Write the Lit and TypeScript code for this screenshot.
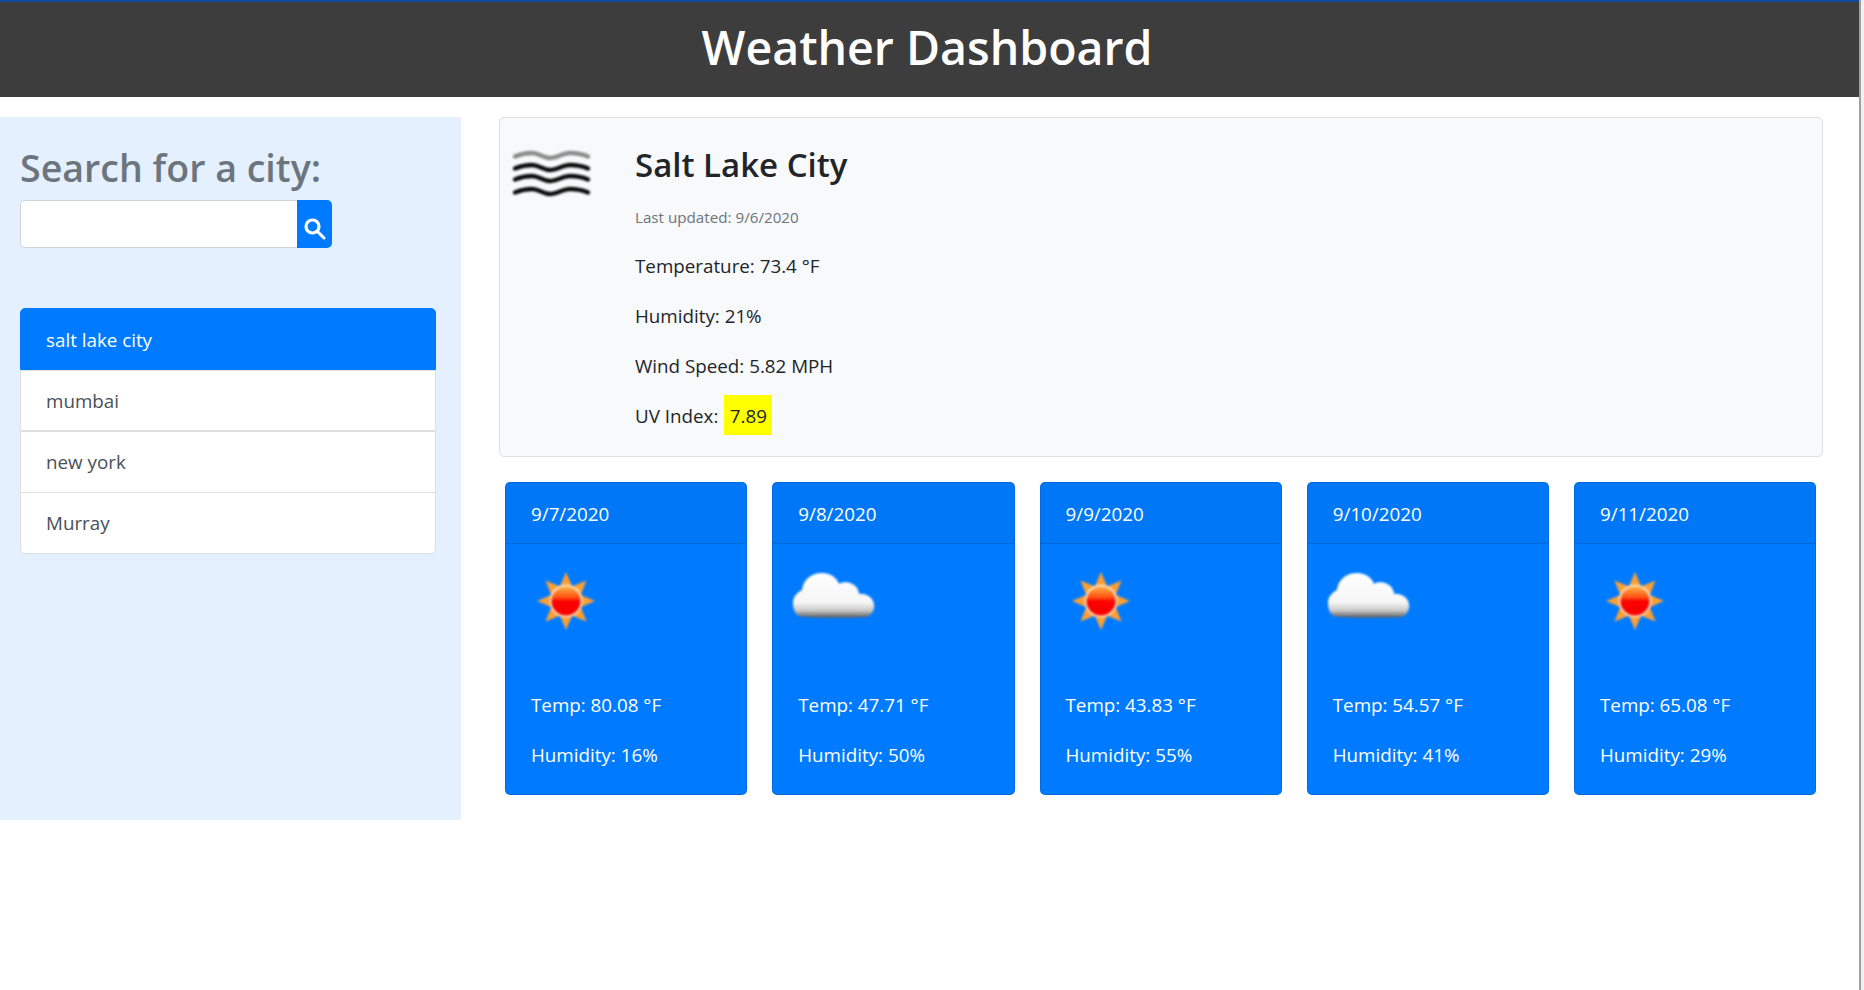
import { LitElement, html, css, svg } from "lit";
import { customElement } from "lit/decorators.js";

const forecast = [
  { date: "9/7/2020", icon: "sun", temp: "80.08", humidity: 16 },
  { date: "9/8/2020", icon: "cloud", temp: "47.71", humidity: 50 },
  { date: "9/9/2020", icon: "sun", temp: "43.83", humidity: 55 },
  { date: "9/10/2020", icon: "cloud", temp: "54.57", humidity: 41 },
  { date: "9/11/2020", icon: "sun", temp: "65.08", humidity: 29 },
];

const cities = ["salt lake city", "mumbai", "new york", "Murray"];

const sunIcon = (id: string) => html`<svg class="weather-icon" viewBox="0 0 88 88">
  <defs>
    <linearGradient id="disk-${id}" x1="0" y1="0" x2="0" y2="1">
      <stop offset="0" stop-color="#ffb347" />
      <stop offset="0.4" stop-color="#ff4a10" />
      <stop offset="0.5" stop-color="#fb0000" />
      <stop offset="1" stop-color="#f80000" />
    </linearGradient>
  </defs>
  <g class="soft">
    ${[0, 45, 90, 135, 180, 225, 270, 315].map(
      (a) => svg`<polygon points="38,29 44,15 50,29 44,44" fill="#fb9f33" transform="rotate(${a} 44 44)" />`
    )}
    <circle cx="44" cy="44" r="16.5" fill="#ffdcb8" />
    <circle cx="44" cy="44" r="14.5" fill="url(#disk-${id})" />
  </g>
</svg>`;

const cloudIcon = (id: string) => html`<svg class="weather-icon" viewBox="0 0 88 88">
  <defs>
    <linearGradient id="cloud-${id}" x1="0" y1="0" x2="0" y2="1">
      <stop offset="0" stop-color="#ffffff" />
      <stop offset="0.66" stop-color="#f6f6f6" />
      <stop offset="0.84" stop-color="#c8c8c8" />
      <stop offset="1" stop-color="#5a5a5a" />
    </linearGradient>
  </defs>
  <path
    class="soft"
    fill="url(#cloud-${id})"
    d="M14 60 C7 60 4 53 4 46 C4 39 9 35 13 33 C14 23 22 16 33 16 C42 16 48 21 50 27 C54 24 64 25 68 31 C69 33 70 35 70 37 C75 36 82 39 84 44 C87 50 84 57 78 60 C68 61 24 61 14 60 Z"
  />
</svg>`;

const mistIcon = html`<svg class="mist-icon" viewBox="0 0 88 64">
  <g fill="none" stroke-width="4.5" stroke-linecap="round" class="soft-more">
    ${[12, 24, 35, 48].map(
      (y, i) => svg`<path
        d="M6 ${y + 1.5} C12 ${y - 1} 18 ${y - 2} 23 ${y - 2} C30 ${y - 2} 34 ${y + 3} 41 ${y + 3} C48 ${y + 3} 54 ${y - 2} 61 ${y - 2} C67 ${y - 2} 73 ${y - 1} 79 ${y + 1.5}"
        stroke=${i === 0 ? "#8a8a8a" : "#0a0a0a"}
      />`
    )}
  </g>
</svg>`;

@customElement("app-root")
export class AppRoot extends LitElement {
  static styles = css`
    :host {
      display: flex;
      min-height: 990px;
      background: #fff;
      font-family: "Open Sans", "Noto Sans", sans-serif;
      font-size: 18.8px;
      line-height: 30px;
      color: #212529;
    }
    * {
      box-sizing: border-box;
    }
    .page {
      flex: 1;
      min-width: 0;
    }
    .scrollbar {
      width: 5px;
      background: linear-gradient(90deg, #a0a0a0 0, #a0a0a0 2px, #f1f1f1 2px);
    }
    .banner {
      height: 97px;
      padding-right: 5px;
      background: #3d3d3d;
      border-top: 2px solid #0f4a9e;
      color: #fff;
      text-align: center;
    }
    .banner h1 {
      margin: 0;
      font-size: 46.5px;
      font-weight: 600;
      line-height: 91px;
    }
    .layout {
      display: flex;
      margin-top: 20px;
    }
    .sidebar {
      width: 461px;
      height: 703px;
      padding: 27px 25px 0 20px;
      background: #e4f0fe;
    }
    .sidebar h2 {
      margin: 0 0 8px;
      font-size: 37.6px;
      font-weight: 600;
      line-height: 48px;
      color: #6c757d;
    }
    .search {
      display: flex;
      width: 312px;
      height: 48px;
    }
    .search input {
      flex: 1;
      min-width: 0;
      border: 1px solid #ced4da;
      border-right: 0;
      border-radius: 5px 0 0 5px;
      background: #fff;
    }
    .search button {
      display: flex;
      justify-content: center;
      width: 35px;
      padding: 18px 0 0;
      border: 0;
      border-radius: 0 5px 5px 0;
      background: #007bff;
    }
    .search svg {
      width: 22px;
      height: 22px;
    }
    .cities {
      margin: 60px 0 0;
      padding: 0;
      list-style: none;
      width: 416px;
    }
    .cities li {
      height: 61.75px;
      margin-top: -0.5px;
      padding: 15px 25px 0;
      border: 1px solid #dfdfdf;
      background: #fff;
      color: #495057;
    }
    .cities li:first-child {
      height: 62px;
      margin-top: 0;
      padding-top: 16px;
      border-color: #007bff;
      border-radius: 5px 5px 0 0;
      background: #007bff;
      color: #fff;
    }
    .cities li:last-child {
      border-radius: 0 0 5px 5px;
    }
    .content {
      flex: 1;
      min-width: 0;
      padding: 0 36px 0 38px;
    }
    .current {
      display: flex;
      height: 340px;
      padding: 26px 26px 26px 13px;
      border: 1px solid #dfdfdf;
      border-radius: 5px;
      background: #f8f9fa;
    }
    .mist-icon {
      flex: none;
      width: 88px;
      height: 64px;
      margin: -1px 38px 0 -4px;
    }
    .current h3 {
      margin: 0 0 15px;
      font-size: 33px;
      font-weight: 600;
      line-height: 42px;
    }
    .current p,
    .day p {
      margin: 0 0 20px;
    }
    .current p:last-child,
    .day p:last-child {
      margin-bottom: 0;
    }
    .current p.updated {
      margin-bottom: 19px;
      padding-top: 1px;
      font-size: 15.2px;
      color: #6c757d;
    }
    .uv {
      display: inline-block;
      margin: -6px 0 -4px 1px;
      padding: 6px 5.5px 4px;
      background: #ff0;
    }
    .forecast {
      display: grid;
      grid-template-columns: repeat(5, 1fr);
      gap: 25px;
      margin: 25px 6.75px 0 6px;
    }
    .day {
      border: 1px solid rgba(0, 0, 0, 0.125);
      border-radius: 5px;
      background: #007bff;
      color: #fff;
    }
    .day header {
      height: 61px;
      padding: 16px 25px 0;
      border-bottom: 1px solid rgba(0, 0, 0, 0.125);
      background: rgba(0, 0, 0, 0.03);
    }
    .day-body {
      padding: 13px 25px 24px;
    }
    .weather-icon {
      display: block;
      width: 88px;
      height: 88px;
      margin: 0 0 45px -9px;
    }
    .soft {
      filter: blur(0.9px);
    }
    .soft-more {
      filter: blur(1.1px);
    }
  `;

  render() {
    return html`
      <div class="page">
        <div class="banner"><h1>Weather Dashboard</h1></div>
        <div class="layout">
          <aside class="sidebar">
            <h2>Search for a city:</h2>
            <div class="search">
              <input type="text" />
              <button type="button" aria-label="Search">
                <svg viewBox="0 0 22 22" fill="none" stroke="#fff">
                  <circle cx="8.5" cy="8.5" r="6.5" stroke-width="3.2" />
                  <path d="M13.5 13.5 L20 20" stroke-width="3" stroke-linecap="round" />
                </svg>
              </button>
            </div>
            <ul class="cities">
              ${cities.map((c) => html`<li>${c}</li>`)}
            </ul>
          </aside>
          <main class="content">
            <section class="current">
              ${mistIcon}
              <div>
                <h3>Salt Lake City</h3>
                <p class="updated">Last updated: 9/6/2020</p>
                <p>Temperature: 73.4 °F</p>
                <p>Humidity: 21%</p>
                <p>Wind Speed: 5.82 MPH</p>
                <p>UV Index: <span class="uv">7.89</span></p>
              </div>
            </section>
            <section class="forecast">
              ${forecast.map(
                (d, i) => html`<article class="day">
                  <header>${d.date}</header>
                  <div class="day-body">
                    ${d.icon === "sun" ? sunIcon(String(i)) : cloudIcon(String(i))}
                    <p>Temp: ${d.temp} °F</p>
                    <p>Humidity: ${d.humidity}%</p>
                  </div>
                </article>`
              )}
            </section>
          </main>
        </div>
      </div>
      <div class="scrollbar"></div>
    `;
  }
}
